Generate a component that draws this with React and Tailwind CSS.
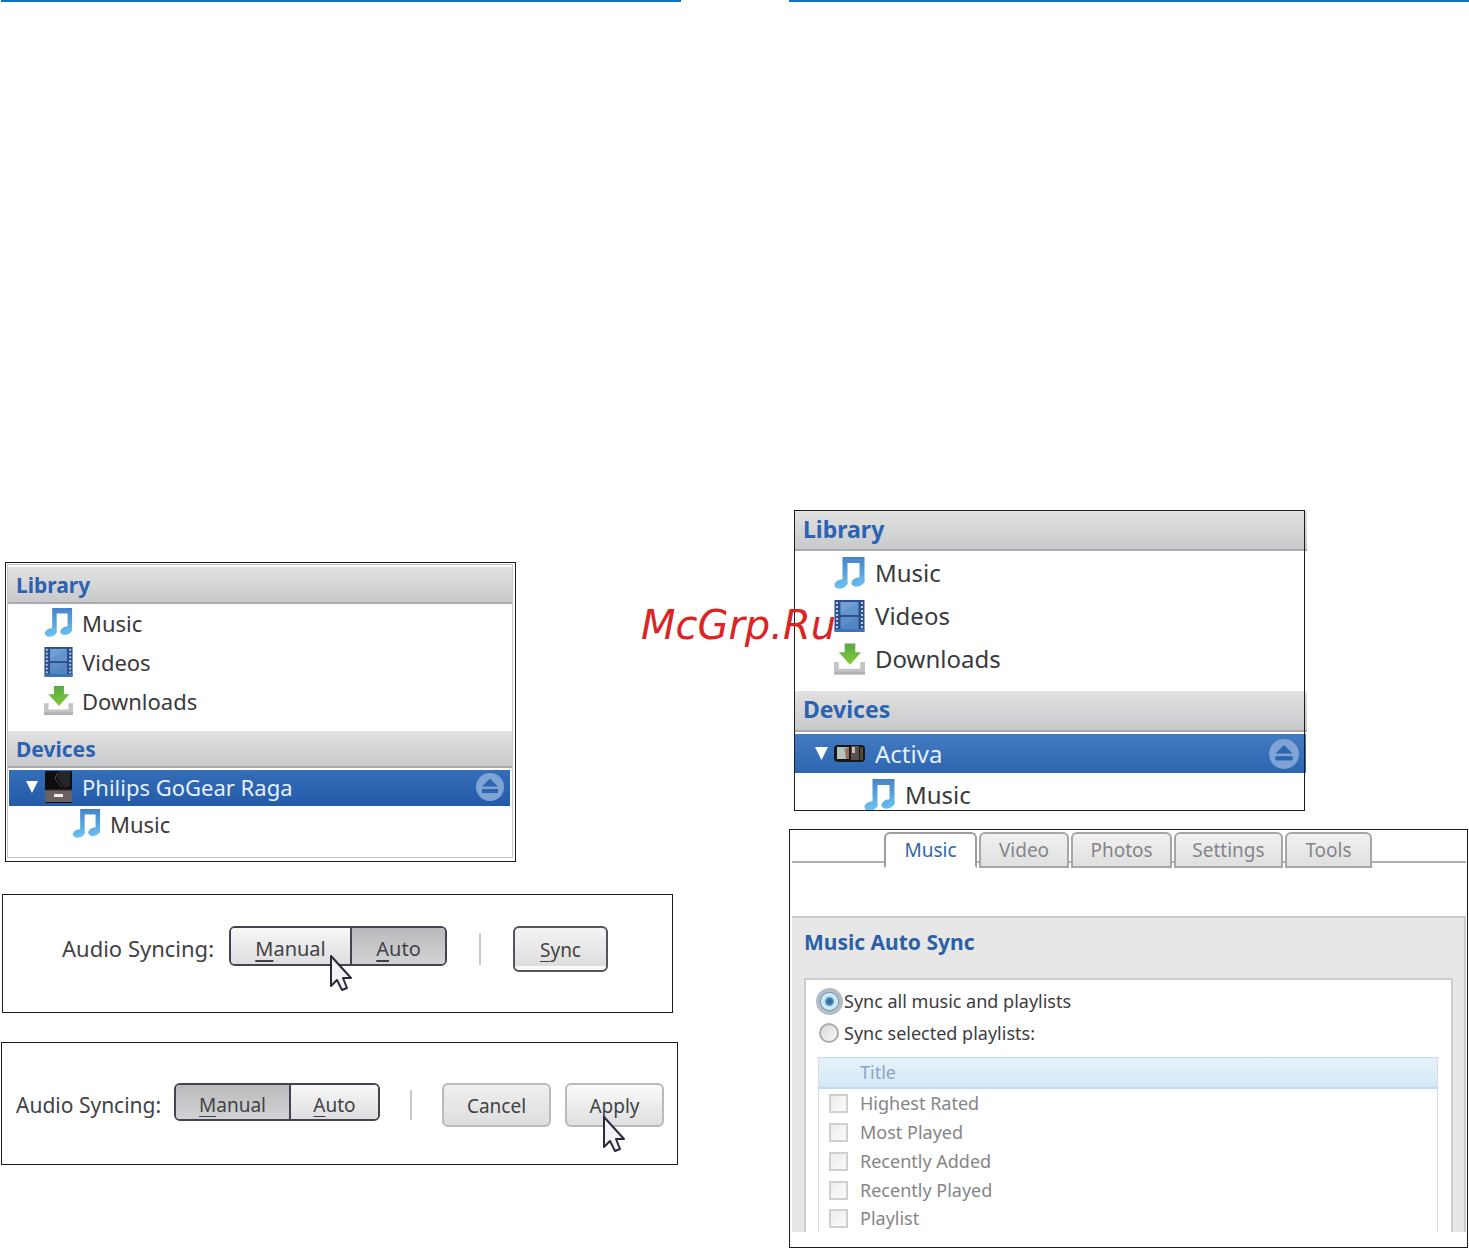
import { useId, useState } from "react";

function MusicIcon({ className }) {
  const id = useId();
  return (
    <svg viewBox="0 0 30 32" className={className} aria-hidden="true">
      <defs>
        <linearGradient id={id} x1="0" y1="0" x2="0" y2="32" gradientUnits="userSpaceOnUse">
          <stop offset="0" stopColor="#4583c8" />
          <stop offset="1" stopColor="#6cc4f2" />
        </linearGradient>
      </defs>
      <g fill={`url(#${id})`}>
        <path d="M8 0H30V25H25V6H13V27H8Z" />
        <ellipse cx="6.500" cy="27" rx="6.700" ry="4.500" transform="rotate(-18 6.500 27)" />
        <ellipse cx="23.500" cy="25" rx="6.700" ry="4.500" transform="rotate(-18 23.500 25)" />
      </g>
    </svg>
  );
}

function FilmIcon({ className }) {
  const holes = [2, 6, 10, 14, 18, 22, 26];
  return (
    <svg viewBox="0 0 30 32" className={className} aria-hidden="true">
      <rect width="30" height="31" fill="#2d5089" />
      <rect y="29" width="30" height="3" fill="#3f73b5" />
      {holes.map((y) => (
        <g key={y} fill="#b8d2ee">
          <rect x="1.500" y={y} width="2" height="2" />
          <rect x="26.500" y={y} width="2" height="2" />
        </g>
      ))}
      <rect x="6" y="2" width="18" height="13" fill="#6494cd" />
      <rect x="6" y="17" width="18" height="12" fill="#5285c3" />
      <path d="M6 2H24L6 13Z" fill="#86aedb" opacity=".4" />
      <path d="M6 17H24L6 27Z" fill="#6b99cf" opacity=".4" />
    </svg>
  );
}

function DownloadIcon({ className }) {
  const id = useId();
  return (
    <svg viewBox="0 0 32 32" className={className} aria-hidden="true">
      <defs>
        <linearGradient id={id} x1="0" y1="0" x2="0" y2="1">
          <stop offset="0" stopColor="#58a845" />
          <stop offset="1" stopColor="#83cc3a" />
        </linearGradient>
      </defs>
      <path d="M0 19H5V26H27V19H32V32H0Z" fill="#c4c4c6" />
      <path d="M0 29H32V32H0Z" fill="#b2b2b4" />
      <path d="M11 0H22V9H28L16.500 22L5 9H11Z" fill={`url(#${id})`} />
    </svg>
  );
}

function RagaIcon() {
  return (
    <svg viewBox="0 0 27 32" className="h-8 w-[27px]" aria-hidden="true">
      <rect width="27" height="32" rx="1" fill="#0d0d10" />
      <path d="M13 0H25V15L20 17L12 7Z" fill="#25252a" />
      <path d="M12 2L10 8L17 16" stroke="#4b4b50" fill="none" />
      <rect y="19" width="27" height="12" fill="#6c6060" />
      <rect x="9" y="23" width="9" height="3" fill="#f1eded" />
      <path d="M0 19H27" stroke="#35302f" />
    </svg>
  );
}

function ActivaIcon() {
  return (
    <svg viewBox="0 0 31 19" className="h-[19px] w-[31px]" aria-hidden="true">
      <rect y="1" width="31" height="17" rx="4" fill="#15171a" />
      <rect x="3" y="3" width="12" height="12" fill="#8fb3a4" />
      <path d="M3 3H9L13 15H3Z" fill="#b3c6b9" />
      <path d="M11 6L15 3V15H12Z" fill="#a8685a" />
      <rect x="17" y="2" width="8" height="14" fill="#55524f" />
      <rect x="18" y="3" width="3" height="6" fill="#c4bfba" />
      <rect x="26" y="3" width="3" height="13" rx="1" fill="#5b4632" />
    </svg>
  );
}

function EjectIcon({ className }) {
  return (
    <svg viewBox="0 0 28 28" className={className} aria-hidden="true">
      <circle cx="14" cy="14" r="14" fill="#7fa3d5" />
      <path d="M14 5.500L22 13.500H6Z" fill="#2d64b0" />
      <rect x="6" y="16" width="16" height="4" fill="#2d64b0" />
    </svg>
  );
}

function Pointer({ className }) {
  return (
    <svg
      viewBox="0 0 24 38"
      className={`pointer-events-none absolute z-10 h-[38px] w-6 ${className}`}
      aria-hidden="true"
    >
      <path
        d="M2 2V32L8 26L13 36L18 34L14 24H22Z"
        fill="#f3f3f5"
        stroke="#2b2a3c"
        strokeWidth="2"
        strokeLinejoin="round"
      />
    </svg>
  );
}

const barClass = "bg-linear-to-b from-[#e2e2e2] to-[#c8c9cb] border-b-2 border-[#aaabae] font-bold text-[#2c62b2] flex items-center";

function LeftSidebar() {
  const row = "flex h-[39px] items-center gap-[9px] pb-0.5 pl-9";
  return (
    <section className="ml-1 mr-[165px] border border-[#1c1c1c] p-px pb-[3px] pr-0.5 text-[22px] leading-7 text-[#3a3a3c]">
      <div className="border border-[#c6c6c8] pb-3 pt-0.5">
        <h2 className={`${barClass} h-[37px] pl-2 text-[21px]`}>Library</h2>
        <ul className="pb-[10px]">
          <li className={row}><MusicIcon className="h-[29px] w-[29px]" />Music</li>
          <li className={row}><FilmIcon className="h-[30px] w-[29px]" />Videos</li>
          <li className={row}><DownloadIcon className="h-[29px] w-[29px]" />Downloads</li>
        </ul>
        <h2 className={`${barClass} h-[37px] pl-2 text-[21px]`}>Devices</h2>
        <div className="ml-px mr-0.5 mt-0.5 flex h-9 items-center bg-linear-to-b from-[#346db8] to-[#245ba9] pb-0.5 pl-[17px] pr-1.5 text-[#e6f0ff]">
          <svg viewBox="0 0 12 12" className="h-3 w-3" aria-hidden="true"><path d="M0 0H12L6 12Z" fill="#fff" /></svg>
          <span className="ml-[7px]"><RagaIcon /></span>
          <span className="ml-2.5 flex-1">Philips GoGear Raga</span>
          <button type="button" aria-label="Eject Philips GoGear Raga"><EjectIcon className="h-7 w-7" /></button>
        </div>
        <div className="flex h-[39px] items-center gap-[9px] pb-1 pl-16">
          <MusicIcon className="h-[29px] w-[29px]" />Music
        </div>
      </div>
    </section>
  );
}

function RightSidebar() {
  const row = "flex h-[43px] items-center gap-2.5 pl-[39px]";
  return (
    <section className="relative ml-[5px] mr-[162px] pb-px pl-px pt-px text-2xl text-[#3a3a3c]">
      <div>
        <h2 className={`${barClass} h-10 pb-0.5 pl-2 text-[23px]`}>Library</h2>
        <ul className="pb-[11px]">
          <li className={row}><MusicIcon className="h-8 w-[31px]" />Music</li>
          <li className={row}><FilmIcon className="h-8 w-[31px]" />Videos</li>
          <li className={row}><DownloadIcon className="h-8 w-[31px]" />Downloads</li>
        </ul>
        <h2 className={`${barClass} h-[41px] pb-0.5 pl-2 text-[23px]`}>Devices</h2>
        <div className="mr-px mt-0.5 flex h-[39px] items-center bg-linear-to-b from-[#437bc1] to-[#2e65b1] pl-5 pr-[7px] text-[#e6f0ff]">
          <svg viewBox="0 0 13 13" className="h-[13px] w-[13px]" aria-hidden="true"><path d="M0 0H13L6.500 13Z" fill="#fff" /></svg>
          <span className="ml-1.5"><ActivaIcon /></span>
          <span className="ml-2.5 flex-1">Activa</span>
          <button type="button" aria-label="Eject Activa"><EjectIcon className="h-[30px] w-[30px]" /></button>
        </div>
        <div className="flex h-[37px] items-center gap-2.5 pl-[69px] pt-1.5">
          <MusicIcon className="h-8 w-[31px]" />Music
        </div>
      </div>
      <div className="pointer-events-none absolute inset-0 right-0.5 border border-[#1c1c1c]" />
    </section>
  );
}

const segBase = "flex items-center justify-center pt-1.5";
const lightFill = "bg-linear-to-b from-[#f8f8f8] to-[#dedee0]";
const darkFill = "bg-linear-to-b from-[#b9babc] to-[#d2d3d5]";

function SyncBar() {
  const [mode, setMode] = useState("auto");
  return (
    <section className="ml-px mr-2 flex items-start border border-[#1c1c1c] pb-10 pl-[59px] pt-[31px] text-[#424246]">
      <span className="mt-1 w-[167px] whitespace-nowrap text-[22px] leading-9">Audio Syncing:</span>
      <div className="relative flex h-10 text-xl">
        <div className="flex overflow-hidden rounded-md border-2 border-[#45434f]">
          <button type="button" onClick={() => setMode("manual")} className={`${segBase} w-[119px] ${mode === "manual" ? darkFill : lightFill}`}>
            <span><u className="underline-offset-4">M</u>anual</span>
          </button>
          <button type="button" onClick={() => setMode("auto")} className={`${segBase} w-[95px] border-l-2 border-[#45434f] ${mode === "auto" ? darkFill : lightFill}`}>
            <span><u className="underline-offset-4">A</u>uto</span>
          </button>
        </div>
        <Pointer className="left-[100px] top-7" />
      </div>
      <span className="ml-8 mt-[7px] h-8 w-0.5 bg-[#c9c9cc]" />
      <button type="button" className="ml-8 flex h-[46px] w-[95px] items-center justify-center rounded-md border-2 border-[#55545d] bg-linear-to-b from-[#f4f4f4] from-0% via-[#dededf] via-90% to-[#fafafa] to-90% pt-0.5 text-[19px]">
        <span><u className="underline-offset-4">S</u>ync</span>
      </button>
    </section>
  );
}

function ApplyBar() {
  const [mode, setMode] = useState("manual");
  const plain = "flex h-11 items-center justify-center rounded-md border-2 border-[#b9babc] pt-0.5 text-[19px]";
  return (
    <section className="mr-[3px] flex items-start border border-[#1c1c1c] pb-[37px] pl-3.5 pt-10 text-[#424246]">
      <span className="mt-1 w-[158px] whitespace-nowrap text-[21px] leading-9">Audio Syncing:</span>
      <div className="flex h-[38px] overflow-hidden rounded-md border-2 border-[#45434f] text-[19px]">
        <button type="button" onClick={() => setMode("manual")} className={`${segBase} w-[113px] ${mode === "manual" ? darkFill : lightFill}`}>
          <span><u className="underline-offset-4">M</u>anual</span>
        </button>
        <button type="button" onClick={() => setMode("auto")} className={`${segBase} w-[89px] border-l-2 border-[#45434f] ${mode === "auto" ? darkFill : lightFill}`}>
          <span><u className="underline-offset-4">A</u>uto</span>
        </button>
      </div>
      <span className="ml-[30px] mt-[7px] h-[30px] w-0.5 bg-[#c9c9cc]" />
      <button type="button" className={`${plain} ml-[30px] w-[109px] bg-linear-to-b from-[#efefef] to-[#dededf]`}>Cancel</button>
      <div className="relative ml-3.5">
        <button type="button" className={`${plain} w-[99px] bg-linear-to-b from-[#fafafa] to-[#e0e0e1]`}>Apply</button>
        <Pointer className="left-[37px] top-8" />
      </div>
    </section>
  );
}

const playlists = ["Highest Rated", "Most Played", "Recently Added", "Recently Played", "Playlist"];

function AutoSyncPanel() {
  const [tab, setTab] = useState("Music");
  const tabs = [
    ["Music", "w-[93px]"],
    ["Video", "w-[90px]"],
    ["Photos", "w-[101px]"],
    ["Settings", "w-[109px]"],
    ["Tools", "w-[87px]"],
  ];
  const label = "text-lg leading-6 text-[#3c3c3e]";
  return (
    <section className="mr-px border border-[#1c1c1c] pb-[15px] pl-0.5 pr-px pt-0.5">
      <div className="flex items-start" role="tablist">
        <span className="mt-[29px] h-0.5 w-[92px] bg-[#b1b1b3]" />
        {tabs.map(([name, width], i) => (
          <div key={name} className="flex items-start">
            {i > 0 && <span className="mt-[29px] h-0.5 w-0.5 bg-[#b1b1b3]" />}
            <button
              type="button"
              role="tab"
              aria-selected={tab === name}
              onClick={() => setTab(name)}
              className={`${width} h-9 rounded-t-md border-2 text-[19px] leading-8 ${
                tab === name
                  ? "border-[#9d9da0] border-b-transparent bg-white text-[#2f66ad]"
                  : "border-[#a6a6a8] bg-linear-to-b from-[#f2f2f2] to-[#dfdfe0] text-[#858589]"
              }`}
            >
              {name}
            </button>
          </div>
        ))}
        <span className="mt-[29px] h-0.5 flex-1 bg-[#b1b1b3]" />
      </div>

      <div className="mt-12 border-r-2 border-t-2 border-[#cbcbcc] bg-[#e7e7e7] pl-3 pr-[11px]">
        <h2 className="pb-3 pt-1.5 text-[21px] leading-9 font-bold text-[#2b5fa6]">Music Auto Sync</h2>
        <div className="mt-1.5 border-x-2 border-t-2 border-[#cecece] bg-white pl-3 pr-[13px] pt-[5px]">
          <label className={`${label} flex h-8 items-center`}>
            <span className="-ml-1 flex w-[30px] justify-center">
              <input
                type="radio"
                name="scope"
                defaultChecked
                className="h-[27px] w-[27px] shrink-0 appearance-none rounded-full border-3 border-[#b4bcc4] checked:bg-[radial-gradient(circle,#2f6f9f_0_2px,#5f9cc4_4px,#c4e2f4_5px,#d8edf9_8px,#7795ad_9px,#d9e6ef_11px)]"
              />
            </span>
            Sync all music and playlists
          </label>
          <label className={`${label} flex h-8 items-center`}>
            <span className="-ml-1 flex w-[30px] justify-center">
              <input
                type="radio"
                name="scope"
                className="h-5 w-5 shrink-0 appearance-none rounded-full border-2 border-[#acacae] bg-linear-to-br from-[#d8d8d8] to-[#fafafa] checked:bg-[#7fa9c8]"
              />
            </span>
            Sync selected playlists:
          </label>
          <div className="mt-2 border-x border-[#dcdcdd] text-lg leading-[27px] text-[#858587]">
            <table className="w-full border-separate border-spacing-0">
              <thead>
                <tr className="h-8 bg-linear-to-b from-[#e8f3fb] to-[#d2e8f6] text-[#8ea6c6]">
                  <th className="w-[41px] border-b-2 border-t border-[#c2dbea] p-0" aria-label="Selected" />
                  <th className="border-b-2 border-t border-[#c2dbea] p-0 text-left font-normal">Title</th>
                </tr>
              </thead>
              <tbody>
                {playlists.map((name) => (
                  <tr key={name} className="h-[29px] last:h-[27px]">
                    <td className="p-0 pl-2.5">
                      <input
                        id={name}
                        type="checkbox"
                        className="block h-[19px] w-[19px] appearance-none border-2 border-[#d0d0d1] bg-linear-to-br from-[#ededed] to-[#fbfbfb] checked:bg-[#9db8d3]"
                      />
                    </td>
                    <td className="p-0"><label htmlFor={name}>{name}</label></td>
                  </tr>
                ))}
              </tbody>
            </table>
          </div>
        </div>
      </div>
    </section>
  );
}

export default function App() {
  return (
    <main className="relative grid grid-cols-2 gap-x-[108px] bg-white pl-px font-['Noto_Sans','Open_Sans',sans-serif]">
      <div className="border-t-2 border-[#0f75bc] pt-[560px]">
        <LeftSidebar />
        <div className="mt-8"><SyncBar /></div>
        <div className="mt-[29px]"><ApplyBar /></div>
      </div>
      <div className="border-t-2 border-[#0f75bc] pt-[508px]">
        <RightSidebar />
        <div className="mt-[18px]"><AutoSyncPanel /></div>
      </div>
      <p className="pointer-events-none absolute left-1/2 top-[601px] -translate-x-1/2 pl-2 font-['DejaVu_Sans',sans-serif] text-[40px] leading-[48px] text-[#dc2424] italic">
        McGrp.Ru
      </p>
    </main>
  );
}
